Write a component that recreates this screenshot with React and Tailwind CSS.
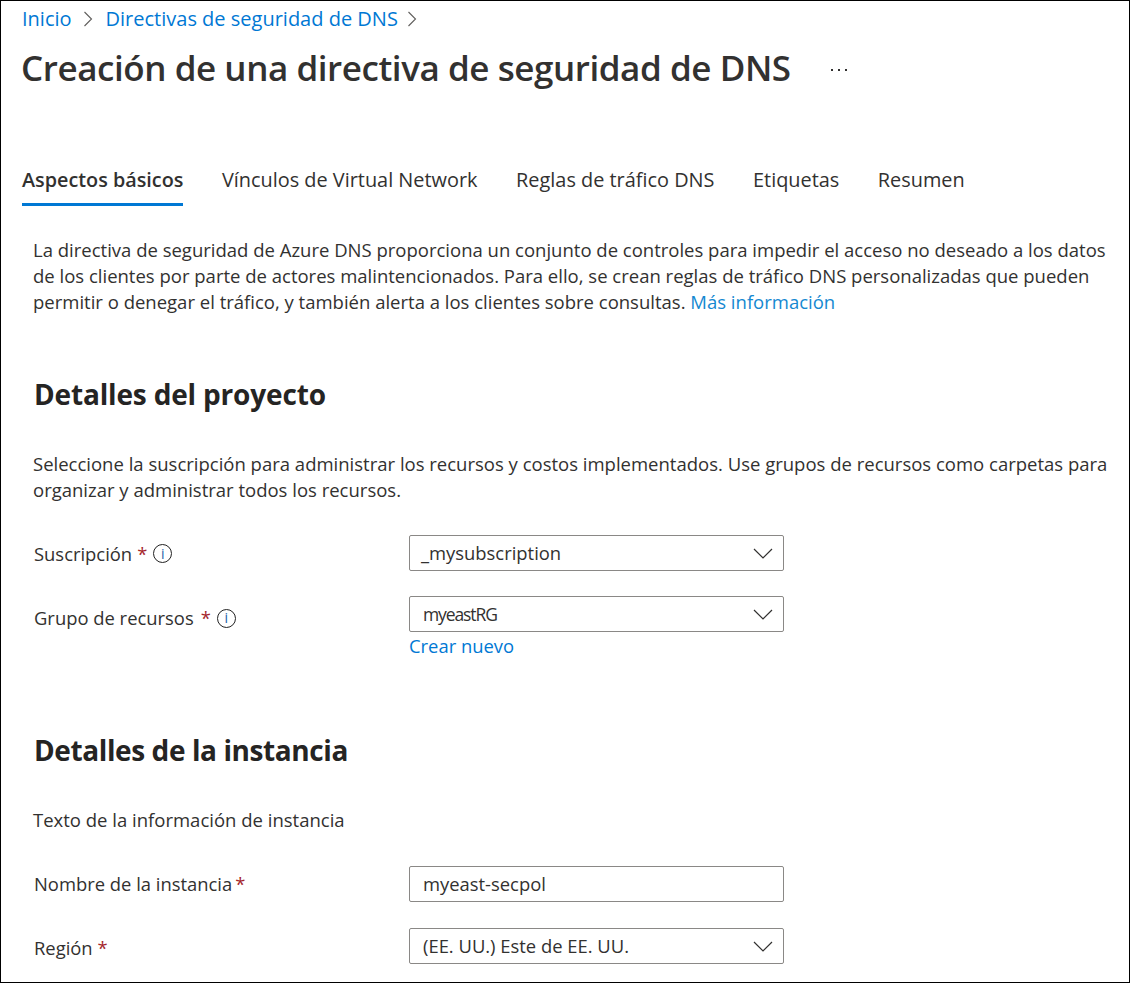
const font = { fontFamily: '"Open Sans", "Noto Sans", sans-serif' }

function ChevronRight({ className = '' }) {
  return (
    <svg className={`h-[16px] w-[10px] shrink-0 ${className}`} viewBox="0 0 10 16" fill="none" stroke="#605e5c" strokeWidth="1.1">
      <path d="M1.5 1l7 7-7 7" />
    </svg>
  )
}

function ChevronDown() {
  return (
    <svg className="h-[11px] w-[20px] shrink-0" viewBox="0 0 20 11" fill="none" stroke="#323130" strokeWidth="1.2">
      <path d="M1 1l9 9 9-9" />
    </svg>
  )
}

function InfoIcon() {
  return (
    <span className="ml-[6px] inline-flex h-[19px] w-[19px] items-center justify-center rounded-full border-[1.5px] border-[#222] text-[14px] leading-none text-[#1a5fa8]">
      i
    </span>
  )
}

function Req({ className = 'ml-[5px]' }) {
  return <span className={`${className} text-[#a4262c]`}>*</span>
}

function Select({ value, textClass = 'pl-[11px] text-[18.4px]' }) {
  return (
    <div className={`flex h-9 w-[375px] items-center justify-between rounded-[2px] border border-[#8a8886] pr-[10px] ${textClass}`}>
      <span className="text-[#323130]">{value}</span>
      <ChevronDown />
    </div>
  )
}

function Tab({ children, active }) {
  return (
    <div className={`h-[46px] pt-[5px] text-[#323130] ${active ? 'border-b-[3px] border-[#0078d4] text-[19.8px] font-semibold' : 'text-[19.9px]'}`}>
      {children}
    </div>
  )
}

export default function App() {
  return (
    <div style={font} className="h-[983px] w-[1130px] overflow-hidden border border-black bg-white text-[18.4px] text-[#323130]">
      <nav className="ml-[21px] flex h-[35px] items-center text-[20px] text-[#0078d4]">
        <span>Inicio</span>
        <ChevronRight className="ml-[11px] mr-[13px]" />
        <span>Directivas de seguridad de DNS</span>
        <ChevronRight className="ml-[9px]" />
      </nav>

      <div className="ml-[20px] mt-[8px] flex items-center">
        <h1 className="text-[35px] font-semibold leading-[48px] tracking-[-0.44px] text-[#323130]">
          Creación de una directiva de seguridad de DNS
        </h1>
        <div className="ml-[40px] flex gap-[5px] pt-[3px]">
          <span className="h-[2px] w-[2px] bg-[#323130]" />
          <span className="h-[2px] w-[2px] bg-[#323130]" />
          <span className="h-[2px] w-[2px] bg-[#323130]" />
        </div>
      </div>

      <div className="ml-[21px] mt-[68px] flex gap-[38.5px]">
        <Tab active>Aspectos básicos</Tab>
        <Tab>Vínculos de Virtual Network</Tab>
        <Tab>Reglas de tráfico DNS</Tab>
        <Tab>Etiquetas</Tab>
        <Tab>Resumen</Tab>
      </div>

      <p className="ml-[32px] mt-[31px] w-[1090px] text-[18.5px] leading-[26px]">
        La directiva de seguridad de Azure DNS proporciona un conjunto de controles para impedir el acceso no deseado a los datos de los clientes por parte de actores malintencionados. Para ello, se crean reglas de tráfico DNS personalizadas que pueden permitir o denegar el tráfico, y también alerta a los clientes sobre consultas.{' '}
        <span className="text-[#1488d1]">Más información</span>
      </p>

      <h2 className="ml-[33px] mt-[60px] text-[28px] font-bold leading-[38px] tracking-[-0.17px] text-[#252423]">Detalles del proyecto</h2>

      <p className="ml-[32px] mt-[38px] w-[1090px] text-[18.5px] leading-[26px]">
        Seleccione la suscripción para administrar los recursos y costos implementados. Use grupos de recursos como carpetas para organizar y administrar todos los recursos.
      </p>

      <div className="ml-[33px] mt-[32px] flex items-center">
        <div className="flex w-[375px] translate-y-[1px] items-center">
          Suscripción <Req />
          <InfoIcon />
        </div>
        <Select value="_mysubscription" />
      </div>

      <div className="ml-[33px] mt-[25px] flex items-start">
        <div className="flex h-9 w-[375px] translate-y-[4px] items-center">
          Grupo de recursos <Req className="ml-[7px]" />
          <InfoIcon />
        </div>
        <div>
          <Select value="myeastRG" textClass="pl-[13px] text-[17.5px] tracking-[-1.1px]" />
          <div className="mt-[1px] leading-[26px] text-[#0078d4]">Crear nuevo</div>
        </div>
      </div>

      <h2 className="ml-[33px] mt-[72px] text-[28px] font-bold leading-[38px] tracking-[-0.4px] text-[#252423]">Detalles de la instancia</h2>

      <p className="ml-[32px] mt-[38px] text-[18.5px] leading-[26px]">Texto de la información de instancia</p>

      <div className="ml-[33px] mt-[33px] flex items-center">
        <div className="w-[375px]">
          Nombre de la instancia<Req className="ml-[3px]" />
        </div>
        <div className="flex h-9 w-[375px] items-center rounded-[2px] border border-[#8a8886] pl-[13px]">myeast-secpol</div>
      </div>

      <div className="ml-[33px] mt-[26px] flex items-center">
        <div className="w-[375px] translate-y-[2px]">
          Región <Req className="ml-0" />
        </div>
        <Select value="(EE. UU.) Este de EE. UU." textClass="pl-[13px] text-[18.4px]" />
      </div>
    </div>
  )
}
